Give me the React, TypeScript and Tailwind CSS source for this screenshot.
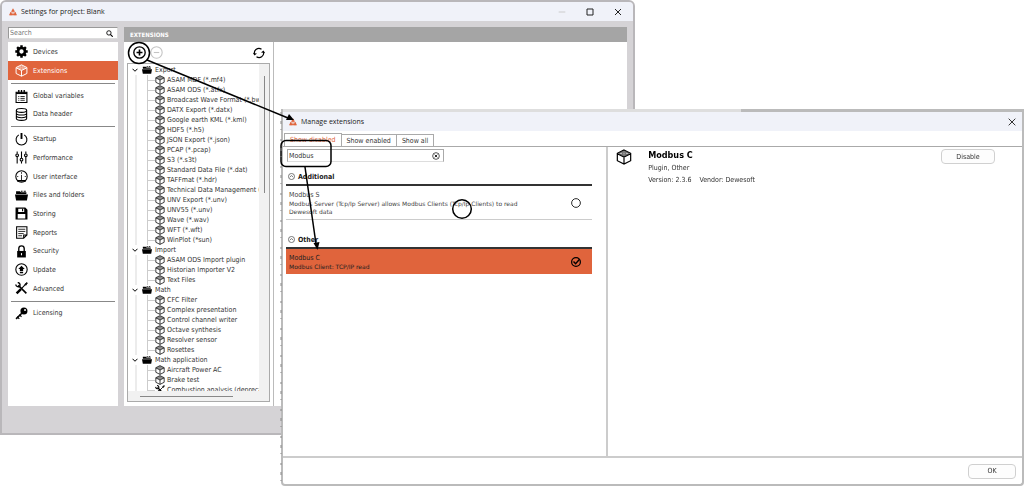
import { type ReactNode, useState } from "react";

/* ── Icons ── */
function Icon({ className, children }: { className: string; children: ReactNode }) {
	return (
		<svg
			viewBox="0 0 24 24"
			fill="none"
			stroke="currentColor"
			strokeWidth="2"
			className={`shrink-0 ${className}`}
			aria-hidden="true"
		>
			{children}
		</svg>
	);
}

function Logo() {
	return (
		<Icon className="size-2 text-[#e0643c]">
			<path d="M12 1 18 11H6z" fill="currentColor" stroke="none" />
			<path d="M5 11 11 22H0zM19 11l5 11H13z" fill="currentColor" stroke="none" />
			<path d="M12 9v5M6 13l6 7 6-7M3 20h18" strokeWidth="3" />
		</Icon>
	);
}

function Cube({ className }: { className: string }) {
	return (
		<Icon className={className}>
			<path d="M12 1.5 22 6.5v11L12 22.5 2 17.5v-11zM2 7l10 5 10-5M12 12v10.500" strokeWidth="1.8" />
			<ellipse cx="12" cy="4.500" rx="2.500" ry="1.300" strokeWidth="1" />
			<ellipse cx="7.500" cy="6.800" rx="2.500" ry="1.300" strokeWidth="1" />
			<ellipse cx="16.500" cy="6.800" rx="2.500" ry="1.300" strokeWidth="1" />
			<ellipse cx="12" cy="9" rx="2.500" ry="1.300" strokeWidth="1" />
		</Icon>
	);
}

function Folder({ className }: { className: string }) {
	return (
		<Icon className={className}>
			<path d="M2 8V4h7l2 2h10v3H2z" fill="currentColor" stroke="none" />
			<path d="M11 3h3v2h-3zM16 3h4v2h-4z" fill="currentColor" stroke="none" />
			<path d="M0 10h24l-2 11H2z" fill="currentColor" stroke="none" />
		</Icon>
	);
}

function Tools({ className }: { className: string }) {
	return (
		<Icon className={className}>
			<path d="M6 6 21 21" strokeWidth="3" />
			<path d="M1.500 4.500a4.500 4.500 0 0 0 7 3.500 4.500 4.500 0 0 0-3.500-7" strokeWidth="2.500" />
			<path d="M3 21 11 13" strokeWidth="4.500" />
			<path d="m11 13 8-8" strokeWidth="2" />
			<path d="m18 4 4-3 1 1-3 4z" fill="currentColor" strokeWidth="1.500" />
		</Icon>
	);
}

const gear = (
	<Icon className="size-[13px]">
		<circle cx="12" cy="12" r="6.500" strokeWidth="5" />
		<path
			d="M12 .5v4M12 19.500v4M.5 12h4M19.500 12h4M3.900 3.900l2.800 2.800M17.300 17.300l2.800 2.800M3.900 20.100l2.800-2.800M17.300 6.700l2.800-2.800"
			strokeWidth="4.500"
		/>
	</Icon>
);

const calendar = (
	<Icon className="size-[13px]">
		<path d="M2 4h20v19H2z" />
		<path d="M2 6h20" strokeWidth="3" />
		<path d="M7 0v5M12 0v5M17 0v5" strokeWidth="2.5" />
		<path d="M6 12h2M10 12h8M6 15.500h2M10 15.500h8M6 19h2M10 19h8" strokeWidth="1.500" />
	</Icon>
);

const database = (
	<Icon className="size-[13px]">
		<ellipse cx="12" cy="4.500" rx="9.500" ry="3.500" />
		<path d="M2.500 4.500v15c0 4.500 19 4.500 19 0v-15M2.500 9.500c0 4.500 19 4.500 19 0M2.500 14.500c0 4.500 19 4.500 19 0" />
	</Icon>
);

const power = (
	<Icon className="size-[13px]">
		<path d="M7 3.500a10 10 0 1 0 10 0" />
		<path d="M12 0v11" strokeWidth="3.500" />
	</Icon>
);

const sliders = (
	<Icon className="size-[13px]">
		<path d="M4 1v4M4 11v12M12 1v12M12 19v4M20 1v4M20 11v12" />
		<circle cx="4" cy="8" r="2.500" />
		<circle cx="12" cy="16" r="2.500" />
		<circle cx="20" cy="8" r="2.500" />
	</Icon>
);

const gauge = (
	<Icon className="size-[13px]">
		<circle cx="12" cy="12" r="10.500" />
		<path d="M4 20h16" strokeWidth="3" />
		<path d="M12 9v10M12 4v3M4 12h2M18 12h2" strokeWidth="1.500" />
	</Icon>
);

const floppy = (
	<Icon className="size-[13px]">
		<path d="M1 1h18l4 4v18H1zm5 2v6h11V3zm-1 10v8h14v-8z" fill="currentColor" fillRule="evenodd" stroke="none" />
		<path d="M14 3v5" />
	</Icon>
);

const report = (
	<Icon className="size-[13px]">
		<path d="M3 1.500h19v15l-6 6H3zM22 16.500h-6v6" />
		<path d="M6 6h13M6 10h13M6 14h10M6 18h7" strokeWidth="1.5" />
	</Icon>
);

const lock = (
	<Icon className="size-[13px]">
		<path d="M4 11h16v12H4z" fill="currentColor" stroke="none" />
		<path d="M7 12V6.500a5 5 0 0 1 10 0V12" strokeWidth="2.500" />
		<path d="M12 15v4" stroke="white" strokeWidth="2" />
	</Icon>
);

const update = (
	<Icon className="size-[13px]">
		<circle cx="12" cy="12" r="10.500" />
		<path d="m12 5 6 6h-3v4H9v-4H6zM9 16.500h6V19H9z" fill="currentColor" stroke="none" />
	</Icon>
);

const licenseKey = (
	<Icon className="size-[13px]">
		<circle cx="16.500" cy="7.500" r="6.500" fill="currentColor" stroke="none" />
		<circle cx="18.500" cy="5.500" r="1.800" fill="white" stroke="none" />
		<path d="M13 11 2 22" strokeWidth="3" />
		<path d="m4 18 4 4M8 14l4 4" strokeWidth="2" />
	</Icon>
);

function Refresh() {
	return (
		<Icon className="size-3">
			<path d="M3 14a9 9 0 0 1 14-9.500M21 10a9 9 0 0 1-14 9.500" strokeWidth="2.500" />
			<path d="m0 12 3 5 5-4zM24 12l-3-5-5 4z" fill="currentColor" stroke="none" />
		</Icon>
	);
}

/* ── Data ── */
const NAV: { label: string; icon: ReactNode }[][] = [
	[
		{ label: "Devices", icon: gear },
		{ label: "Extensions", icon: <Cube className="size-[13px]" /> },
	],
	[
		{ label: "Global variables", icon: calendar },
		{ label: "Data header", icon: database },
	],
	[
		{ label: "Startup", icon: power },
		{ label: "Performance", icon: sliders },
		{ label: "User interface", icon: gauge },
		{ label: "Files and folders", icon: <Folder className="size-[13px]" /> },
		{ label: "Storing", icon: floppy },
		{ label: "Reports", icon: report },
		{ label: "Security", icon: lock },
		{ label: "Update", icon: update },
		{ label: "Advanced", icon: <Tools className="size-[13px]" /> },
	],
	[{ label: "Licensing", icon: licenseKey }],
];

const NAV_HEIGHTS = ["h-[38px]", "h-9", "h-[168px]", "h-4"];

const TREE = [
	{
		name: "Export",
		items: [
			"ASAM MDF (*.mf4)",
			"ASAM ODS (*.atfx)",
			"Broadcast Wave Format (*.bwf)",
			"DATX Export (*.datx)",
			"Google earth KML (*.kml)",
			"HDF5 (*.h5)",
			"JSON Export (*.json)",
			"PCAP (*.pcap)",
			"S3 (*.s3t)",
			"Standard Data File (*.dat)",
			"TAFFmat (*.hdr)",
			"Technical Data Management (*.tdm)",
			"UNV Export (*.unv)",
			"UNV55 (*.unv)",
			"Wave (*.wav)",
			"WFT (*.wft)",
			"WinPlot (*sun)",
		],
	},
	{ name: "Import", items: ["ASAM ODS Import plugin", "Historian Importer V2", "Text Files"] },
	{
		name: "Math",
		items: [
			"CFC Filter",
			"Complex presentation",
			"Control channel writer",
			"Octave synthesis",
			"Resolver sensor",
			"Rosettes",
		],
	},
	{ name: "Math application", items: ["Aircraft Power AC", "Brake test", "Combustion analysis (deprecated)"] },
];

/* ── Settings window ── */
function Sidebar() {
	const [active, setActive] = useState("Extensions");

	return (
		<div className="flex w-[110px] shrink-0 flex-col gap-[3px]">
			<label className="flex h-3 items-center border border-[#999] border-r-[#ddd] border-b-[#ddd] bg-white pr-1 pl-px">
				<input
					type="text"
					placeholder="Search"
					aria-label="Search"
					className="min-w-0 flex-1 bg-transparent outline-none placeholder:text-[#777]"
				/>
				<Icon className="size-[7px] text-black">
					<circle cx="10" cy="10" r="7.5" strokeWidth="3" />
					<path d="m15 15 8 8" strokeWidth="4" />
				</Icon>
			</label>
			<nav className="flex-1 bg-white">
				{NAV.map((group, i) => (
					<div key={group[0].label}>
						{i > 0 && <hr className="mx-[3px] my-[3px] border-[#888]" />}
						<div className={`grid auto-rows-fr ${NAV_HEIGHTS[i]}`}>
							{group.map(({ label, icon }) => (
								<button
									key={label}
									type="button"
									onClick={() => setActive(label)}
									className={`flex items-center gap-[5px] px-[7px] text-left ${
										active === label ? "bg-[#e0643c] text-white" : "text-black"
									}`}
								>
									{icon}
									<span className={active === label ? "" : "text-[#333]"}>{label}</span>
								</button>
							))}
						</div>
					</div>
				))}
			</nav>
		</div>
	);
}

function Tree() {
	return (
		<div className="mx-[3px] flex h-[339px] flex-col border border-[#aaa] bg-[#f1f1f1]">
			<div className="flex min-h-0 flex-1">
				<ul className="min-w-0 flex-1 overflow-hidden bg-white pt-px pl-1 whitespace-nowrap">
					{TREE.map((group) => (
						<li key={group.name}>
							<div className="flex h-2.5 items-center text-black">
								<Icon className="size-1.5">
									<path d="m2 7 10 10L22 7" strokeWidth="4" />
								</Icon>
								<Folder className="ml-1 size-2.5" />
								<span className="ml-[3px] text-[#333]">{group.name}</span>
							</div>
							<ul className="ml-[3px] border-l-2 border-[#ececec] pl-2.5">
								{group.items.map((item) => (
									<li key={item} className="flex h-2.5 items-center border-l border-[#ccc] text-black">
										<span className="w-[7px] shrink-0 border-t border-[#ccc]" />
										{item.startsWith("Combustion") ? (
											<Tools className="size-2.5" />
										) : (
											<Cube className="size-2.5" />
										)}
										<span className="ml-0.5 text-[#333]">{item}</span>
									</li>
								))}
							</ul>
						</li>
					))}
				</ul>
				<div className="flex w-2.5 justify-center pt-3">
					<div className="h-[117px] w-px bg-[#888]" />
				</div>
			</div>
			<div className="flex h-2.5 items-center pl-3">
				<div className="h-px w-[93px] bg-[#888]" />
			</div>
		</div>
	);
}

function SettingsWindow() {
	return (
		<section className="w-[62%] rounded-t-md border-2 border-[#b9b7ba] bg-[#d5d3d6] text-[7px] leading-[10px]">
			<header className="flex h-[19px] items-center rounded-t bg-[#f0f2f9] pr-[11px] pl-[7px] text-[#222]">
				<Logo />
				<h1 className="ml-1 flex-1 font-['Open_Sans',sans-serif]">Settings for project: Blank</h1>
				<div className="flex items-center gap-5">
					<button type="button" aria-label="Minimize">
						<Icon className="size-2 text-[#ccc]">
							<path d="M2 12h20" strokeWidth="3" />
						</Icon>
					</button>
					<button type="button" aria-label="Maximize">
						<Icon className="size-2">
							<path d="M3 3h18v18H3z" strokeWidth="3" />
						</Icon>
					</button>
					<button type="button" aria-label="Close settings">
						<Icon className="size-2">
							<path d="m3 3 18 18M21 3 3 21" strokeWidth="3" />
						</Icon>
					</button>
				</div>
			</header>
			<div className="flex gap-1.5 px-1.5 pt-1.5 pb-[27px]">
				<Sidebar />
				<main className="min-w-0 flex-1 bg-white">
					<h2 className="flex h-[15px] items-center bg-[#a5a5a5] px-1.5 text-[6px] font-bold text-white">
						EXTENSIONS
					</h2>
					<div className="w-[150px] border-r border-[#bbb] pb-1">
						<div className="flex h-[21px] items-center gap-1 px-2 text-black">
							<button type="button" aria-label="Add extension" className="ml-px">
								<Icon className="size-[13px]">
									<circle cx="12" cy="12" r="10.5" strokeWidth="2.5" />
									<path d="M6.500 12h11M12 6.500v11" strokeWidth="3" />
								</Icon>
							</button>
							<button type="button" aria-label="Remove extension" className="mr-auto">
								<Icon className="size-[13px] text-[#c4c4c4]">
									<circle cx="12" cy="12" r="10.5" />
									<path d="M7 12h10" />
								</Icon>
							</button>
							<button type="button" aria-label="Refresh">
								<Refresh />
							</button>
						</div>
						<Tree />
					</div>
				</main>
			</div>
		</section>
	);
}

/* ── Manage extensions dialog ── */
function GroupHeader({ children }: { children: ReactNode }) {
	return (
		<h3 className="flex h-[17px] items-center gap-[3px] border-b-2 border-[#333] px-0.5 font-bold text-[#222]">
			<Icon className="size-[7px]">
				<circle cx="12" cy="12" r="10.5" />
				<path d="m6 14 6-5 6 5" />
			</Icon>
			{children}
		</h3>
	);
}

function ExtensionRow({
	name,
	description,
	selected,
	onSelect,
}: {
	name: string;
	description: string;
	selected: boolean;
	onSelect: () => void;
}) {
	return (
		<label
			className={`flex items-center justify-between pt-1 pr-[11px] pb-[3px] pl-[3px] ${
				selected ? "bg-[#e0643c] text-[#222]" : "border-b border-[#ccc] text-[#444]"
			}`}
		>
			<span className="flex flex-col">
				<span className="leading-[10px]">{name}</span>
				<span className="max-w-[244px] font-['DejaVu_Sans',sans-serif] text-[6px] leading-2">
					{description}
				</span>
			</span>
			<input type="radio" name="extension" checked={selected} onChange={onSelect} className="sr-only" />
			<Icon className="size-2.5 text-black">
				<circle cx="12" cy="12" r="10.5" strokeWidth={selected ? 3 : 2} />
				{selected && <path d="m6 11 5 5 9-10" strokeWidth="3.500" />}
			</Icon>
		</label>
	);
}

function ManageDialog() {
	const [tab, setTab] = useState("Show disabled");
	const [query, setQuery] = useState("Modbus");
	const [selected, setSelected] = useState("Modbus C");

	return (
		<section
			role="dialog"
			aria-label="Manage extensions"
			className="absolute top-[109px] right-0 bottom-0 left-[281px] flex flex-col rounded-b border-x-2 border-b-2 border-[#bbb] bg-white text-[7px] leading-[10px] text-[#333]"
		>
			{/* windows further back show through above the title bar */}
			<div className="flex h-[3px] shrink-0">
				<div className="w-[62%] bg-[#dedede]" />
				<div className="flex-1 bg-[#bbb]" />
			</div>
			<header className="flex h-[19px] shrink-0 items-center bg-[#f0f2f9] px-1.5">
				<Logo />
				<h2 className="ml-1 flex-1 font-['Open_Sans',sans-serif] text-[#222]">Manage extensions</h2>
				<button type="button" aria-label="Close dialog">
					<Icon className="size-2">
						<path d="m2 2 20 20M22 2 2 22" strokeWidth="3" />
					</Icon>
				</button>
			</header>
			<div role="tablist" className="flex h-4 shrink-0 items-end border-b border-[#aaa] px-px">
				{["Show disabled", "Show enabled", "Show all"].map((name) => (
					<button
						key={name}
						type="button"
						role="tab"
						aria-selected={tab === name}
						onClick={() => setTab(name)}
						className={`border border-b-0 border-[#aaa] px-[5px] not-first:border-l-0 ${
							tab === name ? "h-[13px] text-[#e0643c]" : "h-3"
						}`}
					>
						{name}
					</button>
				))}
			</div>
			<div className="flex min-h-0 flex-1">
				<div className="w-[44%] border-r-2 border-[#ccc] pt-0.5 pr-3.5 pl-[3px]">
					<div className="ml-px flex h-[13px] w-[157px] items-center border border-[#aaa] border-b-[#ddd] pr-[3px] pl-px">
						<input
							type="text"
							aria-label="Filter extensions"
							value={query}
							onChange={(e) => setQuery(e.target.value)}
							autoFocus
							className="min-w-0 flex-1 outline-none"
						/>
						<button type="button" aria-label="Clear filter" onClick={() => setQuery("")}>
							<Icon className="size-2 text-black">
								<circle cx="12" cy="12" r="10" />
								<path d="m8 8 8 8M16 8l-8 8" strokeWidth="2.500" />
							</Icon>
						</button>
					</div>
					<div className="mt-[7px]">
						<GroupHeader>Additional</GroupHeader>
						<ExtensionRow
							name="Modbus S"
							description="Modbus Server (Tcp/Ip Server) allows Modbus Clients (Tcp/Ip Clients) to read Dewesoft data"
							selected={selected === "Modbus S"}
							onSelect={() => setSelected("Modbus S")}
						/>
					</div>
					<div className="mt-3">
						<GroupHeader>Other</GroupHeader>
						<ExtensionRow
							name="Modbus C"
							description="Modbus Client: TCP/IP read"
							selected={selected === "Modbus C"}
							onSelect={() => setSelected("Modbus C")}
						/>
					</div>
				</div>
				<div className="flex flex-1 items-start pt-0.5 pr-[27px] pl-2">
					<Cube className="size-4 text-black" />
					<div className="ml-4 flex-1">
						<h3 className="text-[9px] leading-[13px] font-bold text-black">Modbus C</h3>
						<p className="leading-3">Plugin, Other</p>
						<p className="flex gap-2 leading-3">
							<span>Version: 2.3.6</span>
							<span>Vendor: Dewesoft</span>
						</p>
					</div>
					<button type="button" className="h-[15px] w-[54px] rounded-sm border border-[#d0d0d0] bg-[#fdfdfd]">
						Disable
					</button>
				</div>
			</div>
			<footer className="flex h-7 shrink-0 items-center justify-end border-t-2 border-[#ccc] px-1.5">
				<button type="button" className="h-[15px] w-12 rounded-sm border border-[#d0d0d0] bg-[#fdfdfd]">
					OK
				</button>
			</footer>
		</section>
	);
}

/* ── Hand-drawn callouts over both windows ── */
function Callouts() {
	return (
		<svg
			className="pointer-events-none absolute top-0 left-0 h-[486px] w-[1024px]"
			viewBox="0 0 1024 486"
			fill="none"
			stroke="black"
			strokeWidth="1.5"
			aria-hidden="true"
		>
			<circle cx="139" cy="53" r="10.500" />
			<path d="M147 60 288 118" />
			<path d="m294 120-8 0 3-6z" fill="black" stroke="none" />
			<rect x="281" y="140.500" width="50" height="26" rx="5" />
			<path d="m305 167 11 77" />
			<path d="m317.500 250-4-7 6-1z" fill="black" stroke="none" />
			<circle cx="462" cy="209" r="9.300" />
			{/* specks of the page left of the dialog */}
			<path d="M281 112V484" stroke="#888" strokeDasharray="2 7 3 5 1 9" strokeWidth="1" />
		</svg>
	);
}

export default function App() {
	return (
		<div className="relative min-h-screen overflow-hidden bg-white font-['DejaVu_Sans_Condensed','DejaVu_Sans',sans-serif]">
			<SettingsWindow />
			<ManageDialog />
			<Callouts />
		</div>
	);
}
